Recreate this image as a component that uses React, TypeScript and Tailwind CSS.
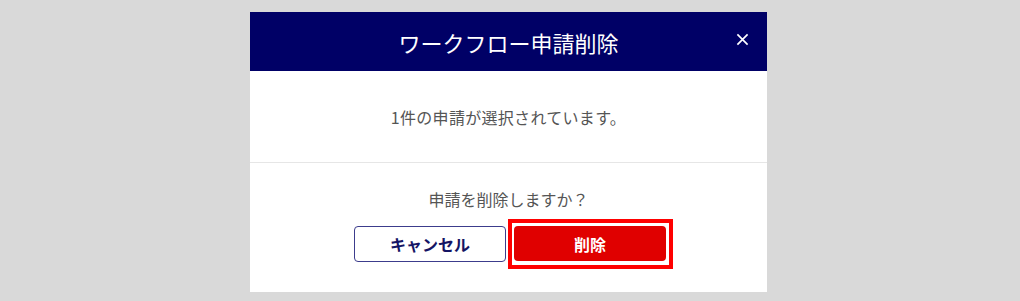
export default function App() {
  return (
    <div
      className="h-[301px] w-full bg-[#d9d9d9] pt-[12px]"
      style={{ fontFamily: '"Noto Sans CJK JP", "Noto Sans", sans-serif' }}
    >
      <div className="ml-[250px] w-[517px] bg-white">
        <div className="relative flex h-[59px] items-center justify-center bg-[#000066]">
          <h2 className="text-[22px] font-normal leading-none text-white">ワークフロー申請削除</h2>
          <button className="absolute right-[18px] top-[20px] flex h-[14px] w-[14px] items-center justify-center text-white">
            <svg viewBox="0 0 14 14" className="h-[13px] w-[13px]" fill="none" stroke="currentColor" strokeWidth="1.8">
              <path d="M1.5 1.5 L12.5 12.5 M12.5 1.5 L1.5 12.5" />
            </svg>
          </button>
        </div>

        <div className="flex h-[92px] items-center justify-center border-b border-[#e6e6e6]">
          <p className="text-[16px] leading-6 tracking-[0.3px] text-[#555555]">1件の申請が選択されています。</p>
        </div>

        <div className="flex flex-col items-center pb-[30px] pt-[24px]">
          <p className="text-[16px] leading-6 text-[#555555]">申請を削除しますか？</p>
          <div className="mt-[15px] flex gap-[8px] pl-[3px]">
            <button className="h-[36px] w-[152px] rounded-[4px] border border-[#3c3c8c] bg-white text-[16px] font-bold text-[#141464]">
              キャンセル
            </button>
            <div className="relative">
              <button className="h-[35px] w-[152px] rounded-[4px] bg-[#e00000] text-[16px] font-bold text-white">
                削除
              </button>
              <span className="pointer-events-none absolute -bottom-[7px] -left-[6px] -right-[7px] -top-[7px] border-4 border-[#ff0000]" />
            </div>
          </div>
        </div>
      </div>
    </div>
  );
}
